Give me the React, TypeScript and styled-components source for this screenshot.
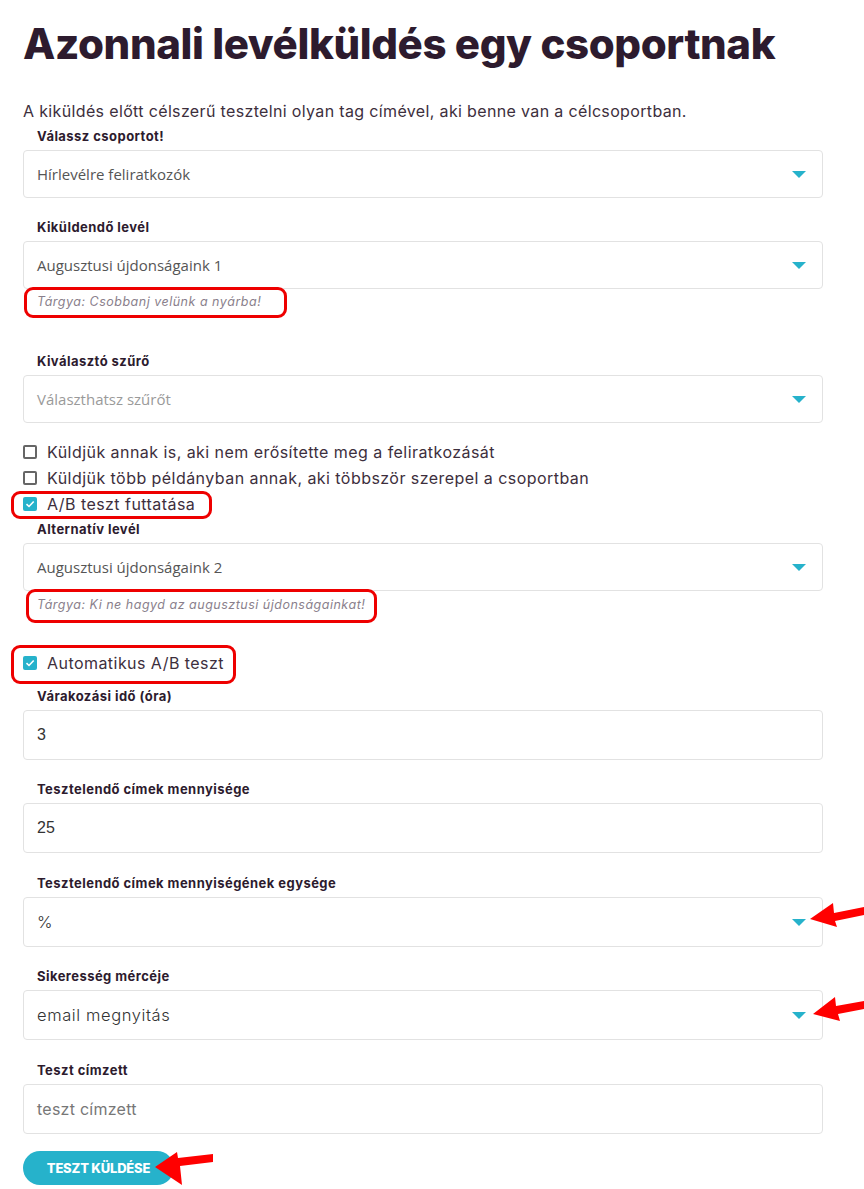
import React from "react";
import styled, { createGlobalStyle } from "styled-components";

const GlobalStyle = createGlobalStyle`
  body {
    margin: 0;
    background: #ffffff;
    font-family: "Inter", "Noto Sans", sans-serif;
  }
`;

const teal = "#26b2cb";
const ink = "#2d1b2e";

const Page = styled.main`
  position: relative;
  width: 864px;
  min-height: 1189px;
  padding: 16px 0 0 23px;
  box-sizing: border-box;
  overflow: hidden;
`;

const Form = styled.section`
  width: 800px;
  display: flex;
  flex-direction: column;
`;

const Title = styled.h1`
  margin: 0;
  font-size: 42px;
  line-height: 56px;
  font-weight: 800;
  letter-spacing: -0.4px;
  color: ${ink};
`;

const Lead = styled.p`
  margin: 28px 0 0;
  font-size: 16px;
  line-height: 22px;
  letter-spacing: 0.35px;
  color: #3d2f3d;
`;

const Field = styled.div<{ $mt: number }>`
  display: flex;
  flex-direction: column;
  gap: 5px;
  margin-top: ${(p) => p.$mt}px;
`;

const Label = styled.label`
  padding-left: 14px;
  font-size: 13px;
  line-height: 18px;
  font-weight: 700;
  letter-spacing: 0.45px;
  color: ${ink};
`;

const Box = styled.div<{ $h: number }>`
  height: ${(p) => p.$h}px;
  box-sizing: border-box;
  border: 1px solid #e2e2e2;
  border-radius: 4px;
  padding: 0 16px 0 13px;
  display: flex;
  align-items: center;
  justify-content: space-between;
`;

type Tone = "open" | "placeholder" | "arial" | "light" | "hint";

const Value = styled.span<{ $tone: Tone }>`
  font-size: ${(p) =>
    p.$tone === "open" || p.$tone === "placeholder" ? "15px" : p.$tone === "light" ? "16.5px" : "16px"};
  font-family: ${(p) =>
    p.$tone === "open" || p.$tone === "placeholder"
      ? '"Open Sans", sans-serif'
      : p.$tone === "arial"
      ? '"Liberation Sans", Arial, sans-serif'
      : '"Inter", sans-serif'};
  font-weight: ${(p) => (p.$tone === "light" ? 300 : 400)};
  letter-spacing: ${(p) => (p.$tone === "light" ? "0.6px" : p.$tone === "hint" ? "0.25px" : "0")};
  color: ${(p) =>
    p.$tone === "open"
      ? "#555555"
      : p.$tone === "placeholder"
      ? "#9a9a9a"
      : p.$tone === "hint"
      ? "#777777"
      : "#333333"};
`;

const Caret = styled.span`
  width: 0;
  height: 0;
  border-left: 7px solid transparent;
  border-right: 7px solid transparent;
  border-top: 7px solid ${teal};
`;

const NoteRow = styled.div<{ $mt: number }>`
  margin-top: ${(p) => p.$mt}px;
  padding-left: 14px;
  display: flex;
`;

const Note = styled.span`
  font-size: 12.5px;
  line-height: 18px;
  font-style: italic;
  letter-spacing: 0.5px;
  color: #8a7f8c;
`;

const Highlight = styled.span<{ $t: number; $r: number; $b: number; $l: number }>`
  display: inline-flex;
  align-items: center;
  flex-shrink: 0;
  border: 3px solid #ee0000;
  border-radius: 9px;
  padding: ${(p) => `${p.$t - 3}px ${p.$r - 3}px ${p.$b - 3}px ${p.$l - 3}px`};
  margin: ${(p) => `-${p.$t}px -${p.$r}px -${p.$b}px -${p.$l}px`};
`;

const Checks = styled.div<{ $mt: number }>`
  margin-top: ${(p) => p.$mt}px;
  display: flex;
  flex-direction: column;
`;

const CheckRow = styled.div`
  height: 26px;
  display: flex;
  align-items: center;
`;

const CheckBox = styled.span<{ $on?: boolean }>`
  width: 14px;
  height: 14px;
  flex-shrink: 0;
  box-sizing: border-box;
  border-radius: 2px;
  border: ${(p) => (p.$on ? "none" : "2px solid #666666")};
  background: ${(p) => (p.$on ? teal : "#ffffff")};
  display: flex;
  align-items: center;
  justify-content: center;
  margin-right: 10px;
`;

const CheckText = styled.span`
  font-size: 16px;
  letter-spacing: 0.45px;
  color: #3d2f3d;
  line-height: 20px;
  white-space: nowrap;
`;

const SendButton = styled.button`
  margin-top: 17px;
  align-self: flex-start;
  width: 151px;
  height: 34px;
  border: none;
  border-radius: 17px;
  background: ${teal};
  color: #ffffff;
  font-family: "Inter", sans-serif;
  font-weight: 800;
  font-size: 13px;
  letter-spacing: -0.2px;
  padding: 0;
`;

const Overlay = styled.svg`
  position: absolute;
  left: 0;
  top: 0;
  pointer-events: none;
`;

const Tick = () => (
  <svg width="10" height="8" viewBox="0 0 10 8">
    <path d="M1.5 4.2 L4 6.5 L8.7 1.5" fill="none" stroke="#fff" strokeWidth="1.6" />
  </svg>
);

const SelectBox: React.FC<{ h: number; tone: Tone; text: string }> = ({ h, tone, text }) => (
  <Box $h={h}>
    <Value $tone={tone}>{text}</Value>
    <Caret />
  </Box>
);

const InputBox: React.FC<{ tone: Tone; text: string }> = ({ tone, text }) => (
  <Box $h={50}>
    <Value $tone={tone}>{text}</Value>
  </Box>
);

const Check: React.FC<{ on?: boolean; text: string }> = ({ on, text }) => (
  <CheckRow>
    <CheckBox $on={on}>{on && <Tick />}</CheckBox>
    <CheckText>{text}</CheckText>
  </CheckRow>
);

export default function App() {
  return (
    <Page>
      <GlobalStyle />
      <Form>
        <Title>Azonnali levélküldés egy csoportnak</Title>
        <Lead>
          A kiküldés előtt célszerű tesztelni olyan tag címével, aki benne van a célcsoportban.
        </Lead>

        <Field $mt={5}>
          <Label>Válassz csoportot!</Label>
          <SelectBox h={48} tone="open" text="Hírlevélre feliratkozók" />
        </Field>

        <Field $mt={20}>
          <Label>Kiküldendő levél</Label>
          <SelectBox h={48} tone="open" text="Augusztusi újdonságaink 1" />
        </Field>
        <NoteRow $mt={4}>
          <Highlight $t={6} $r={26} $b={7} $l={13}>
            <Note>Tárgya: Csobbanj velünk a nyárba!</Note>
          </Highlight>
        </NoteRow>

        <Field $mt={41}>
          <Label>Kiválasztó szűrő</Label>
          <SelectBox h={48} tone="placeholder" text="Választhatsz szűrőt" />
        </Field>

        <Checks $mt={16}>
          <Check text="Küldjük annak is, aki nem erősítette meg a feliratkozását" />
          <Check text="Küldjük több példányban annak, aki többször szerepel a csoportban" />
          <CheckRow>
            <Highlight $t={3} $r={17} $b={5} $l={12}>
              <CheckBox $on>
                <Tick />
              </CheckBox>
              <CheckText>A/B teszt futtatása</CheckText>
            </Highlight>
          </CheckRow>
        </Checks>

        <Field $mt={3}>
          <Label>Alternatív levél</Label>
          <SelectBox h={48} tone="open" text="Augusztusi újdonságaink 2" />
        </Field>
        <NoteRow $mt={5}>
          <Highlight $t={7} $r={12} $b={9} $l={11}>
            <Note>Tárgya: Ki ne hagyd az augusztusi újdonságainkat!</Note>
          </Highlight>
        </NoteRow>

        <Checks $mt={36}>
          <CheckRow>
            <Highlight $t={8} $r={12} $b={11} $l={12}>
              <CheckBox $on>
                <Tick />
              </CheckBox>
              <CheckText>Automatikus A/B teszt</CheckText>
            </Highlight>
          </CheckRow>
        </Checks>

        <Field $mt={11}>
          <Label>Várakozási idő (óra)</Label>
          <InputBox tone="arial" text="3" />
        </Field>

        <Field $mt={20}>
          <Label>Tesztelendő címek mennyisége</Label>
          <InputBox tone="arial" text="25" />
        </Field>

        <Field $mt={21}>
          <Label>Tesztelendő címek mennyiségének egysége</Label>
          <SelectBox h={50} tone="light" text="%" />
        </Field>

        <Field $mt={20}>
          <Label>Sikeresség mércéje</Label>
          <SelectBox h={50} tone="light" text="email megnyitás" />
        </Field>

        <Field $mt={21}>
          <Label>Teszt címzett</Label>
          <InputBox tone="hint" text="teszt címzett" />
        </Field>

        <SendButton>TESZT KÜLDÉSE</SendButton>
      </Form>

      <Overlay width="864" height="1189" viewBox="0 0 864 1189">
        <g fill="#ff0000">
          <polygon points="810,919 833,903 834,913 864,907 864,915 835,921 837,927" />
          <polygon points="813,1014 835,997 836,1006 864,1001 864,1009 838,1014 840,1021" />
          <polygon points="155,1167 177,1152 178,1158 213,1154 213,1162 180,1166 182,1185" />
        </g>
      </Overlay>
    </Page>
  );
}
